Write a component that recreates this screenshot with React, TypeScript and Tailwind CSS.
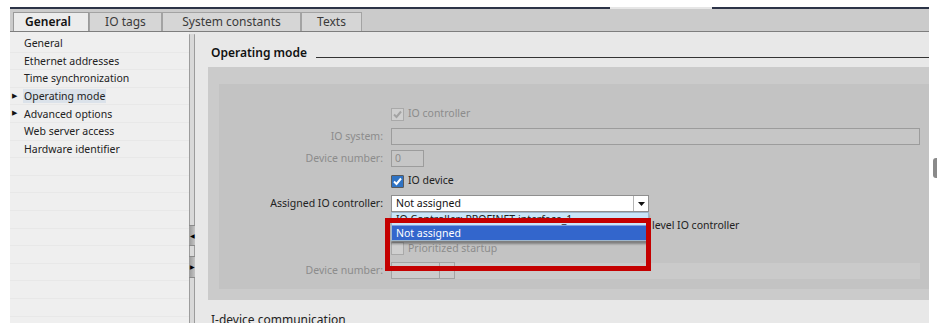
import React from "react";

const navItems = [
  { label: "General" },
  { label: "Ethernet addresses" },
  { label: "Time synchronization" },
  { label: "Operating mode", arrow: true, selected: true },
  { label: "Advanced options", arrow: true },
  { label: "Web server access" },
  { label: "Hardware identifier" },
];

const tabs = [
  { label: "General", w: "w-[76px]", active: true },
  { label: "IO tags", w: "w-[73px]" },
  { label: "System constants", w: "w-[139px]" },
  { label: "Texts", w: "w-[61px]" },
];

function Check({ checked, disabled }: { checked?: boolean; disabled?: boolean }) {
  if (disabled) {
    return (
      <span className="w-[13px] h-[13px] border border-[#a9a9a9] bg-[#cfcfcf] flex items-center justify-center">
        {checked && (
          <svg width="11" height="11" viewBox="0 0 11 11">
            <path d="M2 5.5 L4.5 8 L9 2.5" stroke="#a3a3a3" strokeWidth="2" fill="none" />
          </svg>
        )}
      </span>
    );
  }
  return (
    <span className="w-[13px] h-[13px] border border-[#5a5a5a] bg-[#2f73c4] flex items-center justify-center rounded-[1px]">
      <svg width="11" height="11" viewBox="0 0 11 11">
        <path d="M2 5.5 L4.5 8 L9 2.5" stroke="#ffffff" strokeWidth="2" fill="none" />
      </svg>
    </span>
  );
}

function Row({ label, dark, children }: { label?: string; dark?: boolean; children?: React.ReactNode }) {
  return (
    <div className="flex h-[22.4px] items-center">
      <div className={`w-[164px] text-right ${dark ? "text-[#222]" : "text-[#8c8c8c]"}`}>{label}</div>
      <div className="flex-1 ml-[8px] pr-[9px] flex items-center">{children}</div>
    </div>
  );
}

export default function App() {
  return (
    <div
      className="w-[937px] h-[334px] bg-white overflow-hidden relative text-[10.5px] text-[#222]"
      style={{ fontFamily: '"Noto Sans", "Open Sans", sans-serif' }}
    >
      <div className="pt-[7px] pl-[10px] w-[929px]">
        {/* top line */}
        <div className="flex h-[2px]">
          <div className="w-[600px] bg-[#2c3448]"></div>
          <div className="w-[102px] bg-[#e6e6e6]"></div>
          <div className="flex-1 bg-[#2c3448]"></div>
        </div>

        {/* tab bar */}
        <div className="h-[23px] bg-[#cbcbcb] border-b border-[#7e7e7e] flex items-end pl-[3px]">
          {tabs.map((t) => (
            <div
              key={t.label}
              className={`${t.w} h-[19px] flex items-center justify-center border border-b-0 text-[12px] ${
                t.active
                  ? "bg-[#ececec] border-[#9a9a9a] font-semibold text-[#111] pr-[6px]"
                  : "bg-[#d6d6d6] border-[#a3a3a3] text-[#3a3a3a]"
              }`}
            >
              {t.label}
            </div>
          ))}
        </div>

        {/* body */}
        <div className="flex h-[291px] overflow-hidden">
          {/* left nav */}
          <div className="w-[179px] bg-[#efefef] pt-[3px]">
            {Array.from({ length: 17 }).map((_, i) => {
              const item = navItems[i];
              return (
                <div key={i} className="h-[17.6px] border-b border-[#e8e8e8] flex items-center relative">
                  {item?.arrow && (
                    <span className="absolute left-[2px] text-[7px] text-[#111]">▶</span>
                  )}
                  {item && (
                    <span className={`ml-[13px] px-[1px] leading-[14px] ${item.selected ? "bg-[#dbe2ea]" : ""}`}>
                      {item.label}
                    </span>
                  )}
                </div>
              );
            })}
          </div>

          {/* splitter */}
          <div className="w-[9px] bg-[#e8e8e8] relative">
            <div className="absolute left-0 top-[2px] bottom-0 w-[6px] border-x border-[#9c9c9c] bg-[#d9d9d9] rounded-t-[1px]"></div>
            <div className="absolute left-0 top-[193px] w-[6px] h-[21px] bg-gradient-to-r from-[#9a9a9a] to-[#c4c4c4] border-y border-[#8a8a8a] flex items-center justify-center">
              <span className="text-[6px] text-black leading-none">◀</span>
            </div>
            <div className="absolute left-0 top-[224px] w-[6px] h-[22px] bg-gradient-to-r from-[#9a9a9a] to-[#c4c4c4] border-y border-[#8a8a8a] flex items-center justify-center">
              <span className="text-[6px] text-black leading-none">▶</span>
            </div>
          </div>

          {/* content */}
          <div className="flex-1 bg-[#e8e8e8] pt-[13px]">
            <div className="flex items-end h-[16px] pl-[13px]">
              <span className="text-[12px] font-semibold text-[#111] leading-[16px]">Operating mode</span>
              <div className="flex-1 border-b border-[#333] ml-[9px] mb-[3px]"></div>
            </div>

            <div className="ml-[10px] mt-[6px] bg-[#cbcbcb] pt-[17px] pl-[11px] pb-[11px]">
              <div className="bg-[#c3c3c3] h-[205px] pt-[19px] relative">
                <Row>
                  <Check checked disabled />
                  <span className="ml-[4px] text-[#8c8c8c]">IO controller</span>
                </Row>
                <Row label="IO system:">
                  <div className="flex-1 h-[17px] border border-[#9c9c9c] bg-[#c6c6c6]"></div>
                </Row>
                <Row label="Device number:">
                  <div className="w-[33px] h-[17px] border border-[#9c9c9c] bg-[#c6c6c6] text-[#8c8c8c] pl-[3px] leading-[15px]">
                    0
                  </div>
                </Row>
                <Row>
                  <Check checked />
                  <span className="ml-[4px]">IO device</span>
                </Row>
                <Row label="Assigned IO controller:" dark>
                  <div className="w-[258px] h-[17px] border border-[#8f8f8f] bg-white flex">
                    <span className="flex-1 pl-[4px] leading-[15px] text-[#111]">Not assigned</span>
                    <span className="w-[15px] border-l border-[#b5b5b5] flex items-center justify-center">
                      <svg width="7" height="4" viewBox="0 0 7 4">
                        <path d="M0 0 H7 L3.5 4 Z" fill="#111" />
                      </svg>
                    </span>
                  </div>
                </Row>
                <Row>
                  {/* the start of this row lies under the open list */}
                  <span className="w-[261px]"></span>
                  <span>level IO controller</span>
                </Row>
                <Row>
                  <Check disabled />
                  <span className="ml-[4px] text-[#8c8c8c]">Prioritized startup</span>
                </Row>
                <Row label="Device number:">
                  <div className="w-[64px] h-[17px] border border-[#a3a3a3] bg-[#cbcbcb] flex">
                    <span className="flex-1"></span>
                    <span className="w-[15px] border-l border-[#a3a3a3]"></span>
                  </div>
                  <div className="flex-1 h-[16px] bg-[#cacaca]"></div>
                </Row>

                {/* open dropdown list */}
                <div className="absolute left-[172px] top-[128px] w-[258px] shadow-[0_3px_2px_rgba(0,0,0,0.35)] border border-[#9fb7cc]">
                  <div className="h-[12px] bg-[#c9e5f8] pl-[4px] leading-[13px] text-[#222] overflow-hidden whitespace-nowrap">
                    IO Controller: PROFINET interface_1
                  </div>
                  <div className="h-[15px] bg-[#3366cc] text-white pl-[4px] leading-[15px] border-t border-[#7fa0e0]">
                    Not assigned
                  </div>
                </div>

                {/* red annotation */}
                <div className="absolute left-[166px] top-[134px] w-[266px] h-[53px] border-[5px] border-[#c40000]"></div>
              </div>
            </div>

            <div className="pl-[13px] mt-[13px] text-[12px] leading-[14px] text-[#222]">I-device communication</div>
          </div>
        </div>
      </div>

      {/* right edge handle */}
      <div className="absolute left-[933px] top-[158px] w-[6px] h-[20px] rounded-l-[3px] bg-[#8a8a8a]"></div>
    </div>
  );
}
